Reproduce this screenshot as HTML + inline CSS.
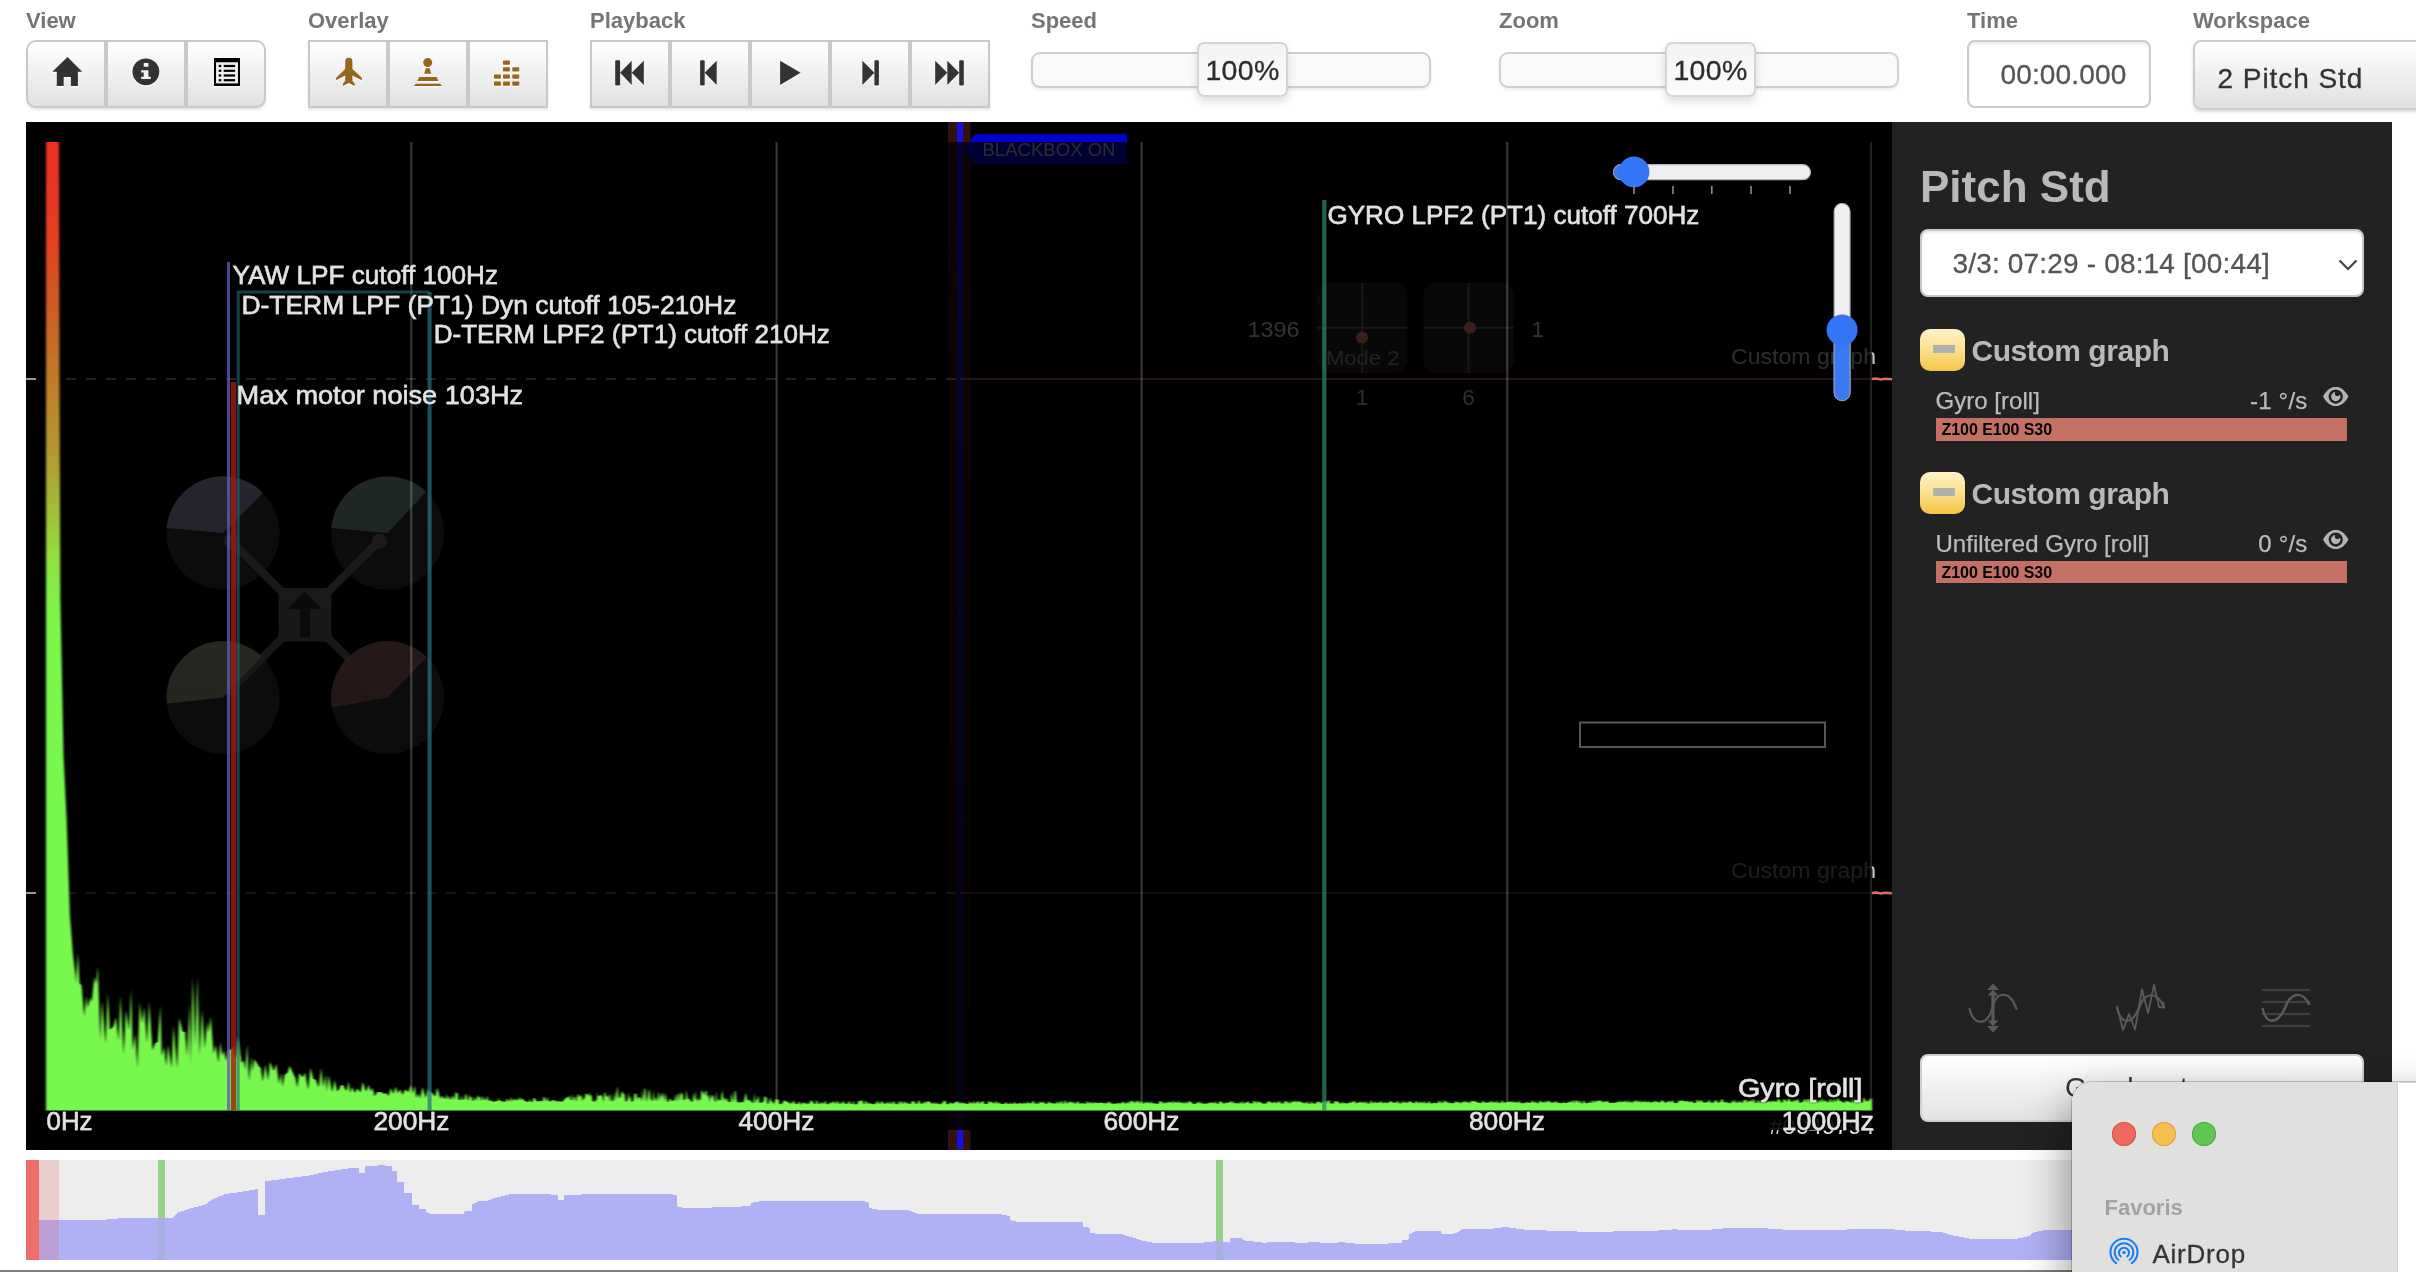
<!DOCTYPE html>
<html><head><meta charset="utf-8"><title>Blackbox Explorer</title>
<style>
*{box-sizing:border-box}
html,body{margin:0;padding:0}
html{width:2416px;height:1272px;overflow:hidden}
body{width:2416px;height:1272px;position:relative;overflow:hidden;background:#fff;font-family:"Liberation Sans",sans-serif;}
.abs{position:absolute}
.lbl{position:absolute;top:9px;font-weight:bold;font-size:22px;line-height:24px;color:#757575;white-space:nowrap}
.grp{position:absolute;top:40px;height:68px;display:flex;border:2px solid #c8c8c8;background:#c8c8c8;box-shadow:0 2px 2px rgba(0,0,0,.10);gap:2px}
.grp .b{flex:1;height:100%;background:linear-gradient(#ffffff 0%,#f4f4f4 30%,#e0e0e0 100%);position:relative}
.grp .b svg{position:absolute;left:0;top:0}
.track{position:absolute;top:52px;height:36px;width:400px;border:2px solid #cfcfcf;border-radius:9px;background:#f9f9f9;box-shadow:0 2px 3px rgba(0,0,0,.08)}
.handle{position:absolute;top:42px;width:91px;height:55px;border:2px solid #d4d4d4;border-radius:7px;background:linear-gradient(#f3f3f3,#fbfbfb);box-shadow:0 5px 8px rgba(0,0,0,.13);font-size:28.5px;line-height:52px;letter-spacing:0.3px;text-align:center;color:#2c2c2c;-webkit-text-stroke:0.3px #2c2c2c}
</style></head>
<body>
<div id="root" style="position:absolute;left:0;top:0;width:2416px;height:1272px;overflow:hidden;will-change:transform;transform:translateZ(0)">
<!-- ===== toolbar labels ===== -->
<div class="lbl" style="left:26px">View</div>
<div class="lbl" style="left:308px">Overlay</div>
<div class="lbl" style="left:590px">Playback</div>
<div class="lbl" style="left:1031px">Speed</div>
<div class="lbl" style="left:1499px">Zoom</div>
<div class="lbl" style="left:1967px">Time</div>
<div class="lbl" style="left:2193px">Workspace</div>

<!--TB-->
<div class="abs" style="left:26px;top:40px;width:240px;height:68px;background:#c9c9c9;border-radius:10px;box-shadow:0 2px 2px rgba(0,0,0,.10);overflow:hidden">
<div class="abs" style="left:2px;top:2px;width:76px;height:64px;border-radius:8px 0 0 8px;background:linear-gradient(#ffffff 0%,#f6f6f6 30%,#e1e1e1 100%)"></div>
<div class="abs" style="left:82px;top:2px;width:76px;height:64px;background:linear-gradient(#ffffff 0%,#f6f6f6 30%,#e1e1e1 100%)"></div>
<div class="abs" style="left:162px;top:2px;width:76px;height:64px;border-radius:0 8px 8px 0;background:linear-gradient(#ffffff 0%,#f6f6f6 30%,#e1e1e1 100%)"></div>
<svg class="abs" style="left:0;top:0" width="240" height="68" viewBox="0 0 240 68"><g transform="translate(0,1.3)" fill="#fff"><path d="M41.5 16.900 L56.200 31.800 H51.900 V45.900 H44.900 V37 H37.700 V45.900 H30.800 V31.800 H26.300 Z"/></g><g fill="#333"><path d="M41.5 16.900 L56.200 31.800 H51.900 V45.900 H44.900 V37 H37.700 V45.900 H30.800 V31.800 H26.300 Z"/></g><g transform="translate(0,1.3)" fill="#fff"><circle cx="119.900" cy="31.800" r="13.400"/></g><g fill="#333"><circle cx="119.900" cy="31.800" r="13.400"/></g><path fill="#f2f2f2" d="M117.700 23 h4.700 v3.800 h-4.700 Z M115.200 30.300 h7.200 v6.500 h2.300 v2.200 h-9.500 v-2.200 h2.500 v-4.200 h-2.500 Z"/><g transform="translate(0,1.3)"><rect x="188" y="18.100" width="26" height="27.800" fill="#fff"/></g><g fill="#000"><path fill-rule="evenodd" d="M188 18.100 H214 V45.900 H188 Z M190.200 22.600 V43.200 H211.800 V22.600 Z"/><rect x="190.200" y="22.600" width="21.600" height="20.600" fill="#efefef"/><rect x="192.700" y="24.9" width="2.600" height="2.200"/><rect x="197.700" y="24.9" width="11.400" height="2.200"/><rect x="192.700" y="29.7" width="2.600" height="2.200"/><rect x="197.700" y="29.7" width="11.400" height="2.200"/><rect x="192.700" y="34.4" width="2.600" height="2.200"/><rect x="197.700" y="34.4" width="11.400" height="2.200"/><rect x="192.700" y="39.1" width="2.600" height="2.200"/><rect x="197.700" y="39.1" width="11.400" height="2.200"/></g></svg>
</div>
<div class="abs" style="left:308px;top:40px;width:240px;height:68px;background:#c9c9c9;box-shadow:0 2px 2px rgba(0,0,0,.10);overflow:hidden">
<div class="abs" style="left:2px;top:2px;width:76px;height:64px;background:linear-gradient(#ffffff 0%,#f6f6f6 30%,#e1e1e1 100%)"></div>
<div class="abs" style="left:82px;top:2px;width:76px;height:64px;background:linear-gradient(#ffffff 0%,#f6f6f6 30%,#e1e1e1 100%)"></div>
<div class="abs" style="left:162px;top:2px;width:76px;height:64px;background:linear-gradient(#ffffff 0%,#f6f6f6 30%,#e1e1e1 100%)"></div>
<svg class="abs" style="left:0;top:0" width="240" height="68" viewBox="0 0 240 68"><g transform="translate(0,1.3)" fill="#fff"><path d="M37.200 21.400 a3.600 3.600 0 0 1 7.200 0 V28.900 L53.300 37.200 a1.600 1.600 0 0 1 0.600 1.300 V40.300 L44.400 35.400 V40.800 L46.700 43.700 V45.900 L40.900 42.900 L35 45.900 V43.700 L37.200 40.800 V35.400 L28.100 40.300 V38.500 a1.600 1.600 0 0 1 0.600 -1.300 L37.200 28.900 Z"/></g><g fill="#96661e"><path d="M37.200 21.400 a3.600 3.600 0 0 1 7.200 0 V28.900 L53.300 37.200 a1.600 1.600 0 0 1 0.600 1.300 V40.300 L44.400 35.400 V40.800 L46.700 43.700 V45.900 L40.900 42.900 L35 45.900 V43.700 L37.200 40.800 V35.400 L28.100 40.300 V38.500 a1.600 1.600 0 0 1 0.600 -1.300 L37.200 28.900 Z"/></g><g transform="translate(0,1.3)" fill="#fff"><circle cx="119.700" cy="22.600" r="4.500"/><path d="M117.700 28.300 H121.700 L123.200 33.800 H116.200 Z"/><path d="M111.600 37 H128.300 a0.800 0.800 0 0 1 0.800 0.800 L130.100 40.900 H109.300 L110.800 37.800 a0.800 0.800 0 0 1 0.800 -0.800 Z"/><path d="M107.800 43.700 H132.100 L134.100 45.900 H105.800 Z"/></g><g fill="#96661e"><circle cx="119.700" cy="22.600" r="4.500"/><path d="M117.700 28.300 H121.700 L123.200 33.800 H116.200 Z"/><path d="M111.600 37 H128.300 a0.800 0.800 0 0 1 0.800 0.800 L130.100 40.900 H109.300 L110.800 37.800 a0.800 0.800 0 0 1 0.800 -0.800 Z"/><path d="M107.800 43.700 H132.100 L134.100 45.900 H105.800 Z"/></g><g transform="translate(0,1.3)" fill="#fff"><rect x="186" y="34.5" width="6.900" height="4.300" rx="0.700"/><rect x="186" y="41.5" width="6.900" height="4.300" rx="0.700"/><rect x="195" y="20.4" width="6.900" height="4.300" rx="0.700"/><rect x="195" y="27.3" width="6.900" height="4.300" rx="0.700"/><rect x="195" y="34.5" width="6.900" height="4.300" rx="0.700"/><rect x="195" y="41.5" width="6.900" height="4.300" rx="0.700"/><rect x="204.3" y="27.3" width="6.900" height="4.300" rx="0.700"/><rect x="204.3" y="34.5" width="6.900" height="4.300" rx="0.700"/><rect x="204.3" y="41.5" width="6.900" height="4.300" rx="0.700"/></g><g fill="#96661e"><rect x="186" y="34.5" width="6.900" height="4.300" rx="0.700"/><rect x="186" y="41.5" width="6.900" height="4.300" rx="0.700"/><rect x="195" y="20.4" width="6.900" height="4.300" rx="0.700"/><rect x="195" y="27.3" width="6.900" height="4.300" rx="0.700"/><rect x="195" y="34.5" width="6.900" height="4.300" rx="0.700"/><rect x="195" y="41.5" width="6.900" height="4.300" rx="0.700"/><rect x="204.3" y="27.3" width="6.900" height="4.300" rx="0.700"/><rect x="204.3" y="34.5" width="6.900" height="4.300" rx="0.700"/><rect x="204.3" y="41.5" width="6.900" height="4.300" rx="0.700"/></g></svg>
</div>
<div class="abs" style="left:590px;top:40px;width:400px;height:68px;background:#c9c9c9;box-shadow:0 2px 2px rgba(0,0,0,.10);overflow:hidden">
<div class="abs" style="left:2px;top:2px;width:76px;height:64px;background:linear-gradient(#ffffff 0%,#f6f6f6 30%,#e1e1e1 100%)"></div>
<div class="abs" style="left:82px;top:2px;width:76px;height:64px;background:linear-gradient(#ffffff 0%,#f6f6f6 30%,#e1e1e1 100%)"></div>
<div class="abs" style="left:162px;top:2px;width:76px;height:64px;background:linear-gradient(#ffffff 0%,#f6f6f6 30%,#e1e1e1 100%)"></div>
<div class="abs" style="left:242px;top:2px;width:76px;height:64px;background:linear-gradient(#ffffff 0%,#f6f6f6 30%,#e1e1e1 100%)"></div>
<div class="abs" style="left:322px;top:2px;width:76px;height:64px;background:linear-gradient(#ffffff 0%,#f6f6f6 30%,#e1e1e1 100%)"></div>
<svg class="abs" style="left:0;top:0" width="400" height="68" viewBox="0 0 400 68"><g transform="translate(0,1.3)" fill="#fff"><rect x="25.2" y="20.200" width="4.9" height="25.300" rx="1.200"/><path d="M30.1 32.800 L41.7 20.700 V45 Z"/><path d="M41.7 32.800 L53.8 20.700 V45 Z"/><rect x="110.1" y="20.200" width="4.6" height="25.300" rx="1.200"/><path d="M114.7 32.800 L126.7 20.700 V45 Z"/><path d="M190.1 20.700 L210.6 32.800 L190.1 45 Z"/><path d="M272.4 20.700 L284.4 32.800 L272.4 45 Z"/><rect x="284.4" y="20.200" width="4.5" height="25.300" rx="1.200"/><path d="M345.2 20.700 L357.3 32.800 L345.2 45 Z"/><path d="M357.3 20.700 L369.2 32.800 L357.3 45 Z"/><rect x="369.2" y="20.200" width="4.6" height="25.300" rx="1.200"/></g><g fill="#333"><rect x="25.2" y="20.200" width="4.9" height="25.300" rx="1.200"/><path d="M30.1 32.800 L41.7 20.700 V45 Z"/><path d="M41.7 32.800 L53.8 20.700 V45 Z"/><rect x="110.1" y="20.200" width="4.6" height="25.300" rx="1.200"/><path d="M114.7 32.800 L126.7 20.700 V45 Z"/><path d="M190.1 20.700 L210.6 32.800 L190.1 45 Z"/><path d="M272.4 20.700 L284.4 32.800 L272.4 45 Z"/><rect x="284.4" y="20.200" width="4.5" height="25.300" rx="1.200"/><path d="M345.2 20.700 L357.3 32.800 L345.2 45 Z"/><path d="M357.3 20.700 L369.2 32.800 L357.3 45 Z"/><rect x="369.2" y="20.200" width="4.6" height="25.300" rx="1.200"/></g></svg>
</div>
<!--/TB-->

<!-- ===== sliders ===== -->
<div class="track" style="left:1031px"></div>
<div class="handle" style="left:1197px">100%</div>
<div class="track" style="left:1499px"></div>
<div class="handle" style="left:1665px">100%</div>

<!-- ===== time ===== -->
<div class="abs" style="left:1967px;top:40px;width:184px;height:68px;border:2px solid #cccccc;border-radius:8px;background:#fff;box-shadow:inset 0 2px 2px rgba(0,0,0,.075);font-size:28px;line-height:66px;color:#555;padding-left:31.500px;letter-spacing:0.15px;-webkit-text-stroke:0.3px #555">00:00.000</div>
<!-- ===== workspace ===== -->
<div class="abs" style="left:2193px;top:40px;width:260px;height:70px;border:2px solid #cccccc;border-radius:8px;background:linear-gradient(#ffffff,#e0e0e0);box-shadow:0 2px 3px rgba(0,0,0,.15);font-size:28px;line-height:73px;color:#333;padding-left:22.500px;letter-spacing:0.95px;-webkit-text-stroke:0.3px #333">2 Pitch Std</div>

<!-- ===== graph area ===== -->
<div class="abs" id="graph" style="left:26px;top:122px;width:1866px;height:1028px;background:#000;overflow:hidden">
<!--GRAPH-->
<svg class="abs" style="left:0;top:0" width="1866" height="1028" viewBox="26 122 1866 1028" font-family="Liberation Sans, sans-serif">
<defs>
<linearGradient id="sg" gradientUnits="userSpaceOnUse" x1="0" y1="142" x2="0" y2="1110"><stop offset="0" stop-color="#eb3323"/><stop offset="0.06" stop-color="#e63826"/><stop offset="0.103" stop-color="#e14123"/><stop offset="0.188" stop-color="#c86428"/><stop offset="0.247" stop-color="#be7d28"/><stop offset="0.315" stop-color="#b49630"/><stop offset="0.374" stop-color="#a5b937"/><stop offset="0.433" stop-color="#91e141"/><stop offset="0.483" stop-color="#7df548"/><stop offset="0.568" stop-color="#78f84d"/><stop offset="1" stop-color="#78f84d"/></linearGradient>
<filter id="bl" x="-2%" y="-2%" width="104%" height="104%"><feGaussianBlur stdDeviation="1.1 0.7"/></filter>
<filter id="ts" x="-5%" y="-30%" width="110%" height="160%"><feGaussianBlur in="SourceGraphic" stdDeviation="0.45" result="b"/><feDropShadow in="b" dx="0" dy="0" stdDeviation="1.2" flood-color="#000" flood-opacity="0.9"/></filter>
<linearGradient id="og" gradientUnits="userSpaceOnUse" x1="0" y1="142" x2="0" y2="1130"><stop offset="0" stop-color="#000" stop-opacity="0.74"/><stop offset="1" stop-color="#000" stop-opacity="0.90"/></linearGradient>
</defs>
<g id="under">
<rect x="948" y="122" width="22.5" height="1028" fill="#34110e"/>
<rect x="957" y="122" width="6.2" height="1028" fill="#1a10d8"/>
<path d="M26 379 H958" stroke="#969696" stroke-width="2" stroke-dasharray="10 10" fill="none"/>
<path d="M960 379 H1872 " stroke="#e87064" stroke-width="1.600" fill="none"/>
<path d="M1872 379 l4 -0.5 l5 1 l4 -0.8 l7 0.6" stroke="#dc6e64" stroke-width="2.6" fill="none"/>
<path d="M26 893 H958" stroke="#969696" stroke-width="2" stroke-dasharray="10 10" fill="none"/>
<path d="M960 893 H1872 " stroke="#e87064" stroke-width="1.600" fill="none"/>
<path d="M1872 893 l4 -0.5 l5 1 l4 -0.8 l7 0.6" stroke="#dc6e64" stroke-width="2.6" fill="none"/>
<polygon points="964,149 975.5,134 1127,134 1127,164 975.5,164" fill="#0000cd"/>
<text x="982.5" y="156" font-size="18" textLength="133" lengthAdjust="spacingAndGlyphs" fill="#a8a8b0">BLACKBOX ON</text>
<text x="1731" y="363.5" font-size="21.5" textLength="145" lengthAdjust="spacingAndGlyphs" fill="#c8c8c8">Custom graph</text>
<text x="1731" y="877.5" font-size="21.5" textLength="145" lengthAdjust="spacingAndGlyphs" fill="#c8c8c8">Custom graph</text>
<text x="1769.5" y="1133.5" font-size="22" textLength="105" lengthAdjust="spacingAndGlyphs" fill="#f0f0f0">#0049794</text>
<g id="craft">
<circle cx="223" cy="533" r="56.5" fill="#3d3d3d"/>
<circle cx="387.6" cy="533" r="56.5" fill="#3d3d3d"/>
<circle cx="223" cy="697.6" r="56.5" fill="#474747"/>
<circle cx="387.6" cy="697.6" r="56.5" fill="#474747"/>
<line x1="305" y1="615" x2="231.2" y2="541.2" stroke="#888893" stroke-width="8" stroke-linecap="round"/>
<circle cx="231.2" cy="541.2" r="7.500" fill="#888893"/>
<line x1="305" y1="615" x2="379.34" y2="541.2" stroke="#888893" stroke-width="8" stroke-linecap="round"/>
<circle cx="379.34" cy="541.2" r="7.500" fill="#888893"/>
<line x1="305" y1="615" x2="231.2" y2="689.34" stroke="#888893" stroke-width="8" stroke-linecap="round"/>
<circle cx="231.2" cy="689.34" r="7.500" fill="#888893"/>
<line x1="305" y1="615" x2="379.34" y2="689.34" stroke="#888893" stroke-width="8" stroke-linecap="round"/>
<circle cx="379.34" cy="689.34" r="7.500" fill="#888893"/>
<rect x="278.5" y="588" width="53" height="53.5" fill="#888893"/>
<polygon points="304.8,591.6 321.8,609 310.1,609 310.1,637.4 299.9,637.4 299.9,609 287.7,609" fill="#373737"/>
<path d="M223 533 L166.7 528.0 A56.5 56.5 0 0 1 263.0 493.0 Z" fill="#c1c1f4" opacity="0.92"/>
<path d="M387.6 533 L331.3 528.0 A56.5 56.5 0 0 1 426.1 491.7 Z" fill="#a3cbcb" opacity="0.92"/>
<path d="M223 697.6 L166.8 703.5 A56.5 56.5 0 0 1 261.5 656.3 Z" fill="#ebebce" opacity="0.92"/>
<path d="M387.6 697.6 L332.0 707.4 A56.5 56.5 0 0 1 426.8 657.0 Z" fill="#e08d8d" opacity="0.92"/>
</g>
<g id="sticks">
<rect x="1317" y="282.7" width="90.4" height="90.2" rx="13" fill="#232323"/>
<rect x="1423.5" y="282.7" width="90.4" height="90.2" rx="13" fill="#232323"/>
<path d="M1362.3 283 V373 M1317 327.8 H1407.4 M1468.5 283 V373 M1423.5 327.8 H1513.9" stroke="#686868" stroke-width="2" fill="none"/>
<circle cx="1362" cy="337.5" r="6" fill="#ff837a"/><circle cx="1470" cy="327.8" r="6" fill="#ff837a"/>
<text x="1247.6" y="337.4" font-size="22.5" textLength="52" lengthAdjust="spacingAndGlyphs" fill="#d9d9d9">1396</text>
<text x="1531.4" y="337.4" font-size="22.5" fill="#d9d9d9">1</text>
<text x="1362" y="404.9" font-size="22.5" text-anchor="middle" fill="#d9d9d9">1</text>
<text x="1468.5" y="404.9" font-size="22.5" text-anchor="middle" fill="#d9d9d9">6</text>
<text x="1326" y="364.6" font-size="21" textLength="73.5" lengthAdjust="spacingAndGlyphs" fill="#989898">Mode 2</text>
</g>
</g>
<rect x="46" y="142" width="1826" height="988" fill="url(#og)"/>
<rect x="410.2" y="142" width="2.2" height="968" fill="#fff" fill-opacity="0.21"/>
<rect x="775.5" y="142" width="2.2" height="968" fill="#fff" fill-opacity="0.21"/>
<rect x="1140.5" y="142" width="2.2" height="968" fill="#fff" fill-opacity="0.21"/>
<rect x="1506.1" y="142" width="2.2" height="968" fill="#fff" fill-opacity="0.21"/>
<rect x="1870.3" y="142" width="1.6" height="968" fill="#fff" fill-opacity="0.16"/>
<polygon filter="url(#bl)" fill="url(#sg)" points="46.0,1110.5 46.0,142.0 59.0,142.0 59.6,400.0 60.4,600.0 63.6,757.0 66.7,820.0 69.9,915.0 73.0,955.0 75.5,975.0 76.0,983.5 77.9,952.5 79.6,982.9 81.6,985.4 84.2,1016.5 86.3,995.4 87.8,1007.9 90.3,997.3 91.7,1002.0 94.4,977.3 96.1,983.9 97.8,966.5 100.2,1040.4 102.0,1000.6 105.6,1043.4 107.8,992.8 109.8,1029.5 111.6,1028.5 113.7,1025.7 115.9,1017.0 118.5,1040.9 120.5,995.7 123.6,1054.6 125.9,1010.3 129.1,1030.5 131.1,989.3 132.8,1050.3 135.3,1033.5 137.4,1067.9 139.7,1002.0 142.2,1023.6 144.2,1006.9 147.0,1043.5 149.1,1001.8 152.6,1050.5 155.0,1043.6 157.7,1041.8 160.4,1005.6 161.8,1056.2 164.2,1047.1 166.3,1066.5 168.1,1044.6 171.6,1068.0 173.5,1025.2 177.1,1068.8 179.2,1017.8 182.6,1031.4 185.1,1032.1 187.0,1056.4 189.6,1003.5 190.7,1063.5 192.7,977.0 195.3,1045.3 197.3,977.0 199.7,1055.2 202.0,1009.2 204.8,1049.1 207.1,1021.5 208.3,1032.4 210.8,1016.9 213.6,1054.0 215.7,1044.8 218.5,1062.7 220.3,1042.0 222.3,1055.8 224.1,1050.6 226.1,1061.3 228.1,1050.1 231.6,1049.3 233.4,1045.8 235.8,1059.6 237.6,1035.6 241.6,1063.0 243.8,1060.4 245.2,1070.0 247.2,1044.5 249.0,1080.7 251.7,1056.5 252.8,1071.2 254.5,1059.0 258.5,1065.7 260.9,1068.2 262.8,1082.1 265.3,1064.4 268.1,1080.4 270.0,1061.5 273.8,1071.3 276.4,1063.8 279.0,1084.1 281.2,1072.5 282.5,1087.0 284.5,1074.9 287.6,1072.4 289.7,1065.8 293.3,1073.8 295.4,1078.1 297.3,1087.7 299.2,1072.9 302.8,1077.6 305.0,1072.2 308.1,1090.1 310.5,1067.7 313.4,1079.1 315.6,1079.5 318.7,1087.4 321.2,1067.5 323.1,1087.3 325.7,1074.9 326.9,1091.7 328.7,1075.3 332.2,1092.3 334.7,1080.0 337.2,1091.6 339.4,1088.7 340.6,1085.5 343.0,1084.9 346.3,1091.3 348.8,1081.5 350.2,1093.2 352.2,1087.1 355.0,1093.3 357.1,1088.2 360.6,1092.4 362.7,1082.1 366.1,1091.8 368.8,1084.8 370.8,1091.7 372.5,1087.4 374.6,1096.5 377.1,1091.7 379.2,1092.4 381.4,1091.7 383.8,1093.9 386.3,1093.1 388.6,1096.1 390.6,1088.1 393.2,1093.9 395.7,1086.6 397.7,1093.4 399.9,1089.2 402.7,1094.9 405.0,1089.2 408.4,1092.2 411.0,1084.5 412.4,1093.8 415.0,1085.8 416.1,1098.0 418.3,1093.5 420.1,1098.5 422.5,1087.0 425.7,1098.2 428.1,1088.6 429.4,1091.3 432.1,1092.9 435.1,1096.8 437.3,1087.5 440.5,1099.0 441.5,1096.7 442.5,1095.8 443.5,1097.8 444.5,1099.0 445.5,1098.1 446.5,1093.6 447.5,1099.9 448.5,1096.0 449.5,1097.3 450.5,1100.0 451.5,1098.4 452.5,1095.6 453.5,1096.9 454.5,1100.1 455.5,1091.3 456.5,1094.1 457.5,1091.9 458.5,1100.1 459.5,1099.4 460.5,1100.4 461.5,1094.9 462.5,1099.5 463.5,1100.2 464.5,1098.5 465.5,1093.7 466.5,1094.8 467.5,1099.8 468.5,1100.4 469.5,1093.9 470.5,1097.7 471.5,1096.5 472.5,1100.7 473.5,1100.9 474.5,1096.8 475.5,1099.1 476.5,1100.9 477.5,1094.5 478.5,1097.6 479.5,1096.1 480.5,1101.1 481.5,1095.7 482.5,1101.2 483.5,1095.8 484.5,1099.4 485.5,1100.2 486.5,1098.8 487.5,1095.5 488.5,1100.7 489.5,1101.3 490.5,1099.3 491.5,1101.0 492.5,1101.5 493.5,1101.4 494.5,1101.7 495.5,1101.3 496.5,1100.9 497.5,1101.0 498.5,1098.0 499.5,1101.1 500.5,1100.0 501.5,1101.6 502.5,1100.9 503.5,1102.0 504.5,1101.4 505.5,1102.0 506.5,1098.4 507.5,1099.8 508.5,1101.6 509.5,1100.3 510.5,1096.9 511.5,1101.8 512.5,1097.9 513.5,1100.5 514.5,1100.2 515.5,1097.8 516.5,1100.7 517.5,1100.1 518.5,1099.0 519.5,1096.6 520.5,1101.0 521.5,1097.9 522.5,1098.9 523.5,1099.4 524.5,1100.7 525.5,1101.0 526.5,1101.9 527.5,1101.8 528.5,1101.9 529.5,1098.7 530.5,1101.4 531.5,1101.7 532.5,1101.9 533.5,1098.1 534.5,1097.9 535.5,1099.3 536.5,1101.3 537.5,1101.5 538.5,1101.3 539.5,1100.6 540.5,1101.7 541.5,1100.6 542.5,1101.4 543.5,1096.9 544.5,1096.7 545.5,1099.8 546.5,1101.4 547.5,1096.4 548.5,1101.1 549.5,1100.8 550.5,1102.0 551.5,1100.6 552.5,1100.0 553.5,1099.8 554.5,1101.5 555.5,1099.7 556.5,1102.0 557.5,1101.1 558.5,1101.8 559.5,1100.3 560.5,1102.0 561.5,1102.0 562.5,1100.8 563.5,1101.2 564.5,1098.6 565.5,1099.0 566.5,1096.7 567.5,1097.7 568.5,1097.0 569.5,1094.9 570.5,1100.1 571.5,1100.5 572.5,1093.2 573.5,1101.6 574.5,1096.4 575.5,1097.3 576.5,1101.9 577.5,1094.7 578.5,1093.8 579.5,1097.3 580.5,1095.9 581.5,1094.6 582.5,1101.6 583.5,1098.2 584.5,1098.4 585.5,1093.8 586.5,1094.1 587.5,1093.7 588.5,1097.1 589.5,1092.3 590.5,1095.6 591.5,1095.3 592.5,1100.8 593.5,1102.0 594.5,1101.5 595.5,1099.5 596.5,1101.7 597.5,1092.2 598.5,1096.8 599.5,1095.6 600.5,1095.6 601.5,1094.6 602.5,1097.6 603.5,1102.0 604.5,1092.0 605.5,1092.9 606.5,1097.1 607.5,1096.6 608.5,1094.3 609.5,1101.8 610.5,1092.6 611.5,1100.3 612.5,1101.8 613.5,1100.1 614.5,1092.3 615.5,1100.7 616.5,1091.9 617.5,1086.1 618.5,1096.6 619.5,1098.4 620.5,1096.8 621.5,1092.8 622.5,1091.0 623.5,1094.3 624.5,1093.8 625.5,1101.7 626.5,1101.2 627.5,1100.2 628.5,1092.0 629.5,1099.6 630.5,1095.6 631.5,1102.0 632.5,1101.8 633.5,1100.1 634.5,1093.8 635.5,1093.4 636.5,1093.8 637.5,1099.9 638.5,1096.7 639.5,1097.6 640.5,1097.6 641.5,1101.5 642.5,1089.7 643.5,1100.9 644.5,1088.1 645.5,1089.2 646.5,1102.0 647.5,1098.0 648.5,1091.9 649.5,1089.0 650.5,1098.2 651.5,1100.4 652.5,1100.9 653.5,1089.9 654.5,1100.9 655.5,1096.6 656.5,1101.4 657.5,1097.5 658.5,1090.4 659.5,1101.5 660.5,1093.1 661.5,1097.9 662.5,1092.1 663.5,1095.2 664.5,1100.9 665.5,1092.2 666.5,1098.4 667.5,1102.0 668.5,1102.0 669.5,1098.4 670.5,1098.9 671.5,1100.4 672.5,1101.5 673.5,1100.0 674.5,1100.2 675.5,1093.4 676.5,1102.0 677.5,1094.7 678.5,1093.3 679.5,1101.6 680.5,1091.6 681.5,1095.2 682.5,1092.0 683.5,1100.4 684.5,1099.5 685.5,1099.3 686.5,1089.9 687.5,1096.8 688.5,1099.6 689.5,1098.8 690.5,1100.4 691.5,1101.9 692.5,1101.7 693.5,1092.6 694.5,1100.3 695.5,1090.6 696.5,1100.6 697.5,1100.5 698.5,1097.6 699.5,1101.1 700.5,1099.3 701.5,1089.9 702.5,1091.4 703.5,1092.8 704.5,1095.9 705.5,1090.9 706.5,1090.4 707.5,1097.3 708.5,1094.6 709.5,1102.2 710.5,1094.4 711.5,1098.7 712.5,1094.2 713.5,1096.0 714.5,1100.7 715.5,1102.4 716.5,1091.0 717.5,1102.1 718.5,1098.7 719.5,1100.3 720.5,1100.8 721.5,1094.7 722.5,1090.2 723.5,1101.2 724.5,1096.2 725.5,1100.9 726.5,1097.7 727.5,1099.9 728.5,1102.1 729.5,1102.2 730.5,1101.9 731.5,1092.0 732.5,1098.8 733.5,1101.9 734.5,1092.1 735.5,1090.3 736.5,1099.6 737.5,1102.6 738.5,1102.3 739.5,1103.0 740.5,1101.0 741.5,1103.0 742.5,1102.0 743.5,1101.9 744.5,1098.2 745.5,1093.0 746.5,1095.5 747.5,1100.4 748.5,1100.4 749.5,1099.1 750.5,1101.0 751.5,1101.5 752.5,1103.5 753.5,1102.2 754.5,1092.8 755.5,1103.3 756.5,1100.1 757.5,1098.6 758.5,1095.5 759.5,1103.0 760.5,1102.6 761.5,1102.9 762.5,1101.7 763.5,1101.4 764.5,1095.5 765.5,1097.2 766.5,1097.1 767.5,1104.1 768.5,1104.1 769.5,1099.6 770.5,1097.7 771.5,1102.0 772.5,1101.2 773.5,1104.3 774.5,1102.8 775.5,1098.5 776.5,1099.7 777.5,1099.7 778.5,1098.9 779.5,1103.9 780.5,1104.3 781.5,1104.2 782.5,1102.6 783.5,1101.5 784.5,1099.6 785.5,1101.3 786.5,1101.8 787.5,1101.0 788.5,1103.0 789.5,1102.4 790.5,1104.5 791.5,1100.9 792.5,1104.0 793.5,1099.9 794.5,1101.9 795.5,1103.7 796.5,1104.3 797.5,1103.9 798.5,1101.9 799.5,1101.5 800.5,1104.3 801.5,1104.4 802.5,1102.6 803.5,1102.3 804.5,1103.3 805.5,1104.0 806.5,1102.2 807.5,1104.5 808.5,1103.7 809.5,1103.0 810.5,1099.8 811.5,1102.0 812.5,1100.4 813.5,1102.9 814.5,1104.0 815.5,1103.9 816.5,1099.8 817.5,1101.6 818.5,1103.7 819.5,1104.4 820.5,1102.8 821.5,1101.9 822.5,1103.2 823.5,1103.9 824.5,1101.9 825.5,1100.2 826.5,1104.0 827.5,1104.4 828.5,1103.6 829.5,1103.3 830.5,1101.9 831.5,1104.1 832.5,1101.2 833.5,1101.6 834.5,1102.9 835.5,1104.1 836.5,1100.0 837.5,1103.7 838.5,1101.1 839.5,1104.0 840.5,1104.0 841.5,1101.5 842.5,1103.8 843.5,1100.2 844.5,1103.0 845.5,1104.1 846.5,1104.0 847.5,1103.3 848.5,1102.1 849.5,1100.3 850.5,1104.2 851.5,1103.4 852.5,1104.0 853.5,1100.2 854.5,1104.2 855.5,1104.4 856.5,1104.3 857.5,1103.4 858.5,1100.7 859.5,1100.8 860.5,1101.7 861.5,1100.1 862.5,1100.5 863.5,1103.7 864.5,1104.1 865.5,1100.5 866.5,1101.7 867.5,1104.4 868.5,1102.1 869.5,1103.5 870.5,1103.5 871.5,1103.6 872.5,1104.1 873.5,1104.4 874.5,1103.8 875.5,1103.6 876.5,1100.4 877.5,1104.2 878.5,1100.3 879.5,1104.0 880.5,1103.5 881.5,1101.3 882.5,1101.3 883.5,1103.2 884.5,1104.3 885.5,1103.1 886.5,1103.5 887.5,1100.7 888.5,1104.0 889.5,1103.5 890.5,1100.8 891.5,1104.3 892.5,1103.3 893.5,1101.3 894.5,1101.6 895.5,1104.3 896.5,1104.3 897.5,1104.3 898.5,1100.7 899.5,1103.9 900.5,1101.7 901.5,1100.8 902.5,1103.6 903.5,1103.8 904.5,1100.5 905.5,1102.4 906.5,1103.8 907.5,1101.9 908.5,1103.7 909.5,1103.8 910.5,1104.3 911.5,1101.7 912.5,1100.7 913.5,1102.3 914.5,1100.6 915.5,1104.3 916.5,1103.9 917.5,1103.1 918.5,1100.5 919.5,1100.5 920.5,1103.4 921.5,1103.9 922.5,1103.3 923.5,1103.0 924.5,1100.7 925.5,1104.0 926.5,1101.5 927.5,1101.8 928.5,1101.3 929.5,1101.6 930.5,1102.5 931.5,1103.6 932.5,1103.6 933.5,1103.5 934.5,1101.6 935.5,1104.2 936.5,1104.0 937.5,1101.7 938.5,1103.9 939.5,1104.2 940.5,1104.3 941.5,1102.7 942.5,1103.6 943.5,1100.4 944.5,1101.0 945.5,1100.4 946.5,1103.8 947.5,1104.2 948.5,1104.2 949.5,1103.0 950.5,1102.0 951.5,1103.2 952.5,1103.9 953.5,1103.3 954.5,1102.4 955.5,1102.2 956.5,1101.8 957.5,1101.3 958.5,1102.2 959.5,1104.1 960.5,1101.3 961.5,1103.7 962.5,1102.7 963.5,1103.4 964.5,1101.9 965.5,1104.0 966.5,1103.8 967.5,1103.8 968.5,1104.0 969.5,1101.1 970.5,1102.6 971.5,1103.6 972.5,1103.4 973.5,1100.5 974.5,1102.9 975.5,1103.9 976.5,1101.5 977.5,1102.3 978.5,1100.5 979.5,1104.1 980.5,1103.1 981.5,1101.5 982.5,1101.4 983.5,1100.9 984.5,1104.2 985.5,1103.7 986.5,1104.1 987.5,1104.0 988.5,1100.6 989.5,1102.6 990.5,1100.9 991.5,1103.4 992.5,1101.2 993.5,1103.2 994.5,1103.8 995.5,1101.7 996.5,1100.8 997.5,1104.1 998.5,1102.6 999.5,1102.5 1000.5,1103.9 1001.5,1103.4 1002.5,1104.0 1003.5,1103.9 1004.5,1103.8 1005.5,1102.6 1006.5,1102.3 1007.5,1103.9 1008.5,1104.2 1009.5,1103.6 1010.5,1102.2 1011.5,1103.9 1012.5,1103.6 1013.5,1103.9 1014.5,1101.6 1015.5,1102.8 1016.5,1104.1 1017.5,1104.1 1018.5,1103.3 1019.5,1102.7 1020.5,1102.4 1021.5,1104.1 1022.5,1104.0 1023.5,1102.1 1024.5,1103.3 1025.5,1103.7 1026.5,1103.6 1027.5,1100.7 1028.5,1103.6 1029.5,1102.7 1030.5,1103.4 1031.5,1103.2 1032.5,1101.2 1033.5,1100.5 1034.5,1103.4 1035.5,1103.9 1036.5,1101.9 1037.5,1103.9 1038.5,1104.1 1039.5,1101.0 1040.5,1103.2 1041.5,1101.4 1042.5,1103.3 1043.5,1101.1 1044.5,1103.1 1045.5,1103.9 1046.5,1104.1 1047.5,1102.7 1048.5,1102.3 1049.5,1100.9 1050.5,1104.1 1051.5,1102.4 1052.5,1103.4 1053.5,1102.9 1054.5,1104.0 1055.5,1103.6 1056.5,1102.8 1057.5,1100.8 1058.5,1104.0 1059.5,1102.9 1060.5,1101.5 1061.5,1100.6 1062.5,1103.8 1063.5,1104.0 1064.5,1100.7 1065.5,1100.5 1066.5,1102.9 1067.5,1104.1 1068.5,1100.8 1069.5,1103.3 1070.5,1100.9 1071.5,1102.4 1072.5,1101.4 1073.5,1103.9 1074.5,1101.6 1075.5,1103.8 1076.5,1103.2 1077.5,1101.2 1078.5,1101.3 1079.5,1103.8 1080.5,1103.8 1081.5,1103.2 1082.5,1102.8 1083.5,1103.3 1084.5,1104.0 1085.5,1103.7 1086.5,1101.9 1087.5,1100.9 1088.5,1104.1 1089.5,1102.6 1090.5,1101.7 1091.5,1104.1 1092.5,1101.3 1093.5,1103.9 1094.5,1102.4 1095.5,1102.6 1096.5,1102.3 1097.5,1103.5 1098.5,1103.1 1099.5,1102.5 1100.5,1103.1 1101.5,1102.1 1102.5,1103.0 1103.5,1103.1 1104.5,1104.0 1105.5,1102.3 1106.5,1102.9 1107.5,1103.7 1108.5,1101.6 1109.5,1101.5 1110.5,1103.0 1111.5,1103.8 1112.5,1102.9 1113.5,1103.9 1114.5,1103.9 1115.5,1103.1 1116.5,1104.0 1117.5,1103.0 1118.5,1102.8 1119.5,1104.0 1120.5,1102.2 1121.5,1104.0 1122.5,1101.8 1123.5,1101.5 1124.5,1102.7 1125.5,1104.0 1126.5,1102.8 1127.5,1103.2 1128.5,1100.6 1129.5,1103.9 1130.5,1101.1 1131.5,1100.3 1132.5,1101.7 1133.5,1101.3 1134.5,1103.7 1135.5,1100.4 1136.5,1102.8 1137.5,1100.5 1138.5,1100.8 1139.5,1103.8 1140.5,1101.4 1141.5,1100.7 1142.5,1104.0 1143.5,1103.3 1144.5,1101.6 1145.5,1103.8 1146.5,1100.9 1147.5,1103.5 1148.5,1101.3 1149.5,1103.8 1150.5,1102.7 1151.5,1100.7 1152.5,1103.7 1153.5,1103.5 1154.5,1102.7 1155.5,1103.4 1156.5,1104.0 1157.5,1103.7 1158.5,1103.8 1159.5,1100.6 1160.5,1102.0 1161.5,1100.8 1162.5,1103.8 1163.5,1101.4 1164.5,1103.9 1165.5,1102.6 1166.5,1102.2 1167.5,1103.2 1168.5,1101.0 1169.5,1102.5 1170.5,1102.4 1171.5,1100.9 1172.5,1103.9 1173.5,1100.3 1174.5,1102.2 1175.5,1103.1 1176.5,1101.3 1177.5,1103.5 1178.5,1100.3 1179.5,1102.4 1180.5,1103.2 1181.5,1101.5 1182.5,1102.9 1183.5,1103.7 1184.5,1101.6 1185.5,1103.9 1186.5,1101.2 1187.5,1103.5 1188.5,1102.1 1189.5,1100.3 1190.5,1102.3 1191.5,1102.0 1192.5,1103.3 1193.5,1103.9 1194.5,1103.9 1195.5,1103.8 1196.5,1102.2 1197.5,1102.9 1198.5,1102.6 1199.5,1100.8 1200.5,1103.8 1201.5,1103.6 1202.5,1102.0 1203.5,1103.9 1204.5,1103.9 1205.5,1103.2 1206.5,1103.8 1207.5,1103.2 1208.5,1103.6 1209.5,1102.3 1210.5,1102.3 1211.5,1103.6 1212.5,1102.1 1213.5,1102.8 1214.5,1103.8 1215.5,1100.5 1216.5,1103.5 1217.5,1103.7 1218.5,1103.8 1219.5,1102.1 1220.5,1100.9 1221.5,1101.4 1222.5,1103.0 1223.5,1103.4 1224.5,1103.9 1225.5,1102.0 1226.5,1102.4 1227.5,1103.2 1228.5,1102.0 1229.5,1102.9 1230.5,1100.5 1231.5,1101.6 1232.5,1103.5 1233.5,1100.7 1234.5,1103.9 1235.5,1102.5 1236.5,1103.0 1237.5,1103.5 1238.5,1103.8 1239.5,1101.3 1240.5,1103.9 1241.5,1102.4 1242.5,1100.4 1243.5,1103.7 1244.5,1103.6 1245.5,1102.2 1246.5,1102.6 1247.5,1102.0 1248.5,1101.1 1249.5,1103.6 1250.5,1103.3 1251.5,1103.3 1252.5,1103.8 1253.5,1100.7 1254.5,1101.3 1255.5,1101.6 1256.5,1103.8 1257.5,1101.0 1258.5,1101.5 1259.5,1102.7 1260.5,1101.5 1261.5,1102.8 1262.5,1103.5 1263.5,1103.7 1264.5,1103.5 1265.5,1103.8 1266.5,1103.2 1267.5,1101.4 1268.5,1101.7 1269.5,1100.9 1270.5,1101.6 1271.5,1103.4 1272.5,1102.4 1273.5,1102.8 1274.5,1101.2 1275.5,1102.5 1276.5,1103.4 1277.5,1102.0 1278.5,1100.2 1279.5,1103.5 1280.5,1100.7 1281.5,1103.8 1282.5,1103.4 1283.5,1103.4 1284.5,1101.5 1285.5,1100.4 1286.5,1101.4 1287.5,1103.2 1288.5,1100.7 1289.5,1103.2 1290.5,1103.4 1291.5,1100.6 1292.5,1102.0 1293.5,1101.7 1294.5,1101.8 1295.5,1100.1 1296.5,1102.7 1297.5,1100.9 1298.5,1101.7 1299.5,1100.8 1300.5,1102.8 1301.5,1101.5 1302.5,1102.2 1303.5,1103.2 1304.5,1103.5 1305.5,1102.0 1306.5,1103.7 1307.5,1100.5 1308.5,1103.6 1309.5,1103.8 1310.5,1103.7 1311.5,1100.4 1312.5,1103.1 1313.5,1103.6 1314.5,1103.8 1315.5,1103.7 1316.5,1101.7 1317.5,1101.9 1318.5,1101.6 1319.5,1101.5 1320.5,1103.7 1321.5,1102.1 1322.5,1103.0 1323.5,1101.0 1324.5,1101.0 1325.5,1100.6 1326.5,1103.7 1327.5,1100.8 1328.5,1100.5 1329.5,1100.3 1330.5,1103.6 1331.5,1103.4 1332.5,1103.6 1333.5,1103.7 1334.5,1100.9 1335.5,1101.1 1336.5,1101.9 1337.5,1101.0 1338.5,1101.9 1339.5,1103.2 1340.5,1103.6 1341.5,1103.6 1342.5,1101.3 1343.5,1103.4 1344.5,1103.1 1345.5,1102.8 1346.5,1103.7 1347.5,1103.3 1348.5,1103.2 1349.5,1101.5 1350.5,1103.0 1351.5,1103.1 1352.5,1100.2 1353.5,1102.5 1354.5,1100.8 1355.5,1102.0 1356.5,1103.7 1357.5,1102.8 1358.5,1102.7 1359.5,1101.3 1360.5,1103.0 1361.5,1101.6 1362.5,1102.3 1363.5,1103.4 1364.5,1100.8 1365.5,1103.6 1366.5,1101.0 1367.5,1103.5 1368.5,1103.7 1369.5,1103.4 1370.5,1101.3 1371.5,1100.1 1372.5,1103.7 1373.5,1102.5 1374.5,1102.5 1375.5,1101.1 1376.5,1103.4 1377.5,1102.5 1378.5,1103.0 1379.5,1100.9 1380.5,1103.2 1381.5,1100.3 1382.5,1103.2 1383.5,1103.4 1384.5,1101.6 1385.5,1102.5 1386.5,1103.6 1387.5,1101.9 1388.5,1103.6 1389.5,1101.2 1390.5,1101.6 1391.5,1101.2 1392.5,1101.9 1393.5,1103.0 1394.5,1102.8 1395.5,1102.8 1396.5,1100.6 1397.5,1103.6 1398.5,1100.6 1399.5,1103.6 1400.5,1103.4 1401.5,1103.2 1402.5,1100.6 1403.5,1102.4 1404.5,1102.9 1405.5,1100.7 1406.5,1103.3 1407.5,1102.6 1408.5,1102.3 1409.5,1101.3 1410.5,1101.3 1411.5,1101.8 1412.5,1103.0 1413.5,1103.0 1414.5,1103.4 1415.5,1100.9 1416.5,1101.8 1417.5,1101.4 1418.5,1103.4 1419.5,1102.7 1420.5,1101.2 1421.5,1102.1 1422.5,1103.5 1423.5,1102.6 1424.5,1100.6 1425.5,1103.3 1426.5,1103.4 1427.5,1103.1 1428.5,1101.6 1429.5,1100.9 1430.5,1103.4 1431.5,1103.4 1432.5,1103.2 1433.5,1103.0 1434.5,1102.3 1435.5,1103.4 1436.5,1103.0 1437.5,1103.3 1438.5,1100.1 1439.5,1101.4 1440.5,1103.5 1441.5,1100.2 1442.5,1103.5 1443.5,1102.8 1444.5,1100.1 1445.5,1101.1 1446.5,1101.4 1447.5,1102.6 1448.5,1103.3 1449.5,1101.8 1450.5,1103.5 1451.5,1103.3 1452.5,1102.8 1453.5,1103.6 1454.5,1102.8 1455.5,1101.1 1456.5,1101.6 1457.5,1102.4 1458.5,1101.9 1459.5,1102.5 1460.5,1103.4 1461.5,1102.0 1462.5,1102.7 1463.5,1101.4 1464.5,1100.5 1465.5,1102.6 1466.5,1102.1 1467.5,1101.3 1468.5,1102.7 1469.5,1103.2 1470.5,1101.4 1471.5,1100.7 1472.5,1101.2 1473.5,1101.5 1474.5,1100.8 1475.5,1101.6 1476.5,1101.8 1477.5,1102.5 1478.5,1103.0 1479.5,1101.9 1480.5,1103.5 1481.5,1102.7 1482.5,1101.1 1483.5,1101.5 1484.5,1101.8 1485.5,1103.1 1486.5,1102.6 1487.5,1102.5 1488.5,1101.9 1489.5,1102.7 1490.5,1101.6 1491.5,1100.4 1492.5,1103.3 1493.5,1101.7 1494.5,1101.2 1495.5,1102.7 1496.5,1102.4 1497.5,1100.1 1498.5,1103.5 1499.5,1102.2 1500.5,1103.3 1501.5,1101.1 1502.5,1100.3 1503.5,1102.3 1504.5,1103.4 1505.5,1102.0 1506.5,1102.2 1507.5,1101.4 1508.5,1102.3 1509.5,1101.8 1510.5,1100.9 1511.5,1102.2 1512.5,1102.6 1513.5,1100.2 1514.5,1103.2 1515.5,1101.5 1516.5,1102.7 1517.5,1101.2 1518.5,1103.4 1519.5,1100.0 1520.5,1102.8 1521.5,1103.4 1522.5,1103.0 1523.5,1102.6 1524.5,1103.5 1525.5,1102.6 1526.5,1102.6 1527.5,1101.4 1528.5,1102.8 1529.5,1103.0 1530.5,1103.1 1531.5,1101.2 1532.5,1100.2 1533.5,1102.2 1534.5,1103.1 1535.5,1100.9 1536.5,1102.6 1537.5,1103.2 1538.5,1103.3 1539.5,1101.0 1540.5,1100.8 1541.5,1101.7 1542.5,1102.4 1543.5,1102.0 1544.5,1103.1 1545.5,1100.0 1546.5,1102.8 1547.5,1101.6 1548.5,1100.8 1549.5,1100.8 1550.5,1102.3 1551.5,1102.9 1552.5,1102.0 1553.5,1103.3 1554.5,1100.7 1555.5,1102.7 1556.5,1100.6 1557.5,1103.0 1558.5,1102.7 1559.5,1103.0 1560.5,1102.5 1561.5,1103.2 1562.5,1103.4 1563.5,1101.2 1564.5,1102.9 1565.5,1103.0 1566.5,1102.9 1567.5,1102.3 1568.5,1102.4 1569.5,1101.6 1570.5,1101.5 1571.5,1102.7 1572.5,1100.1 1573.5,1100.5 1574.5,1103.4 1575.5,1100.6 1576.5,1100.2 1577.5,1100.8 1578.5,1103.2 1579.5,1100.6 1580.5,1101.6 1581.5,1103.4 1582.5,1103.4 1583.5,1099.9 1584.5,1101.5 1585.5,1103.0 1586.5,1103.3 1587.5,1103.2 1588.5,1103.0 1589.5,1100.8 1590.5,1102.7 1591.5,1103.2 1592.5,1100.1 1593.5,1100.7 1594.5,1103.2 1595.5,1100.2 1596.5,1101.6 1597.5,1100.8 1598.5,1101.3 1599.5,1100.1 1600.5,1100.7 1601.5,1100.4 1602.5,1103.1 1603.5,1101.2 1604.5,1102.0 1605.5,1101.0 1606.5,1102.3 1607.5,1100.2 1608.5,1101.8 1609.5,1102.9 1610.5,1103.0 1611.5,1103.2 1612.5,1102.1 1613.5,1103.3 1614.5,1102.2 1615.5,1103.2 1616.5,1102.1 1617.5,1102.1 1618.5,1101.9 1619.5,1100.2 1620.5,1103.3 1621.5,1100.4 1622.5,1102.2 1623.5,1101.8 1624.5,1101.3 1625.5,1100.3 1626.5,1102.5 1627.5,1102.3 1628.5,1099.6 1629.5,1103.3 1630.5,1101.4 1631.5,1101.4 1632.5,1103.3 1633.5,1101.5 1634.5,1101.2 1635.5,1099.8 1636.5,1102.6 1637.5,1099.4 1638.5,1102.0 1639.5,1102.1 1640.5,1099.9 1641.5,1103.3 1642.5,1100.9 1643.5,1101.4 1644.5,1102.6 1645.5,1100.1 1646.5,1102.5 1647.5,1102.1 1648.5,1101.9 1649.5,1100.6 1650.5,1103.0 1651.5,1102.2 1652.5,1102.3 1653.5,1101.7 1654.5,1100.3 1655.5,1102.7 1656.5,1100.3 1657.5,1102.3 1658.5,1101.9 1659.5,1102.8 1660.5,1101.9 1661.5,1099.4 1662.5,1101.2 1663.5,1100.5 1664.5,1102.6 1665.5,1102.6 1666.5,1102.7 1667.5,1101.5 1668.5,1101.3 1669.5,1100.5 1670.5,1103.3 1671.5,1100.8 1672.5,1099.9 1673.5,1101.7 1674.5,1103.2 1675.5,1102.7 1676.5,1103.3 1677.5,1103.0 1678.5,1099.6 1679.5,1101.4 1680.5,1101.1 1681.5,1100.4 1682.5,1099.7 1683.5,1101.4 1684.5,1101.3 1685.5,1101.3 1686.5,1100.9 1687.5,1101.4 1688.5,1101.0 1689.5,1102.9 1690.5,1101.1 1691.5,1102.0 1692.5,1100.5 1693.5,1103.1 1694.5,1103.0 1695.5,1103.2 1696.5,1100.4 1697.5,1099.6 1698.5,1101.1 1699.5,1102.4 1700.5,1100.1 1701.5,1100.3 1702.5,1101.5 1703.5,1102.7 1704.5,1102.6 1705.5,1102.2 1706.5,1102.5 1707.5,1102.1 1708.5,1101.1 1709.5,1099.3 1710.5,1103.2 1711.5,1101.5 1712.5,1103.2 1713.5,1103.1 1714.5,1100.1 1715.5,1101.4 1716.5,1099.4 1717.5,1102.0 1718.5,1103.2 1719.5,1102.2 1720.5,1101.3 1721.5,1099.2 1722.5,1098.9 1723.5,1101.8 1724.5,1102.1 1725.5,1103.1 1726.5,1101.0 1727.5,1102.8 1728.5,1103.0 1729.5,1103.2 1730.5,1103.2 1731.5,1100.7 1732.5,1103.0 1733.5,1098.9 1734.5,1103.1 1735.5,1099.5 1736.5,1103.0 1737.5,1103.2 1738.5,1100.4 1739.5,1102.7 1740.5,1100.3 1741.5,1102.9 1742.5,1103.1 1743.5,1100.1 1744.5,1100.4 1745.5,1099.5 1746.5,1100.3 1747.5,1103.1 1748.5,1100.9 1749.5,1100.4 1750.5,1101.8 1751.5,1098.9 1752.5,1102.6 1753.5,1098.6 1754.5,1100.3 1755.5,1103.2 1756.5,1103.2 1757.5,1100.7 1758.5,1099.7 1759.5,1103.1 1760.5,1102.4 1761.5,1100.2 1762.5,1102.9 1763.5,1099.3 1764.5,1101.6 1765.5,1103.1 1766.5,1102.2 1767.5,1101.1 1768.5,1101.8 1769.5,1100.5 1770.5,1102.9 1771.5,1099.7 1772.5,1102.2 1773.5,1100.7 1774.5,1100.7 1775.5,1101.9 1776.5,1102.0 1777.5,1099.7 1778.5,1098.5 1779.5,1099.7 1780.5,1101.1 1781.5,1102.4 1782.5,1103.1 1783.5,1098.2 1784.5,1100.2 1785.5,1099.3 1786.5,1102.2 1787.5,1100.8 1788.5,1098.2 1789.5,1099.3 1790.5,1100.8 1791.5,1102.3 1792.5,1101.8 1793.5,1098.8 1794.5,1102.0 1795.5,1100.3 1796.5,1100.8 1797.5,1098.7 1798.5,1099.4 1799.5,1102.4 1800.5,1103.1 1801.5,1102.5 1802.5,1101.8 1803.5,1100.8 1804.5,1099.3 1805.5,1098.7 1806.5,1103.1 1807.5,1099.1 1808.5,1099.3 1809.5,1098.8 1810.5,1100.9 1811.5,1102.4 1812.5,1098.9 1813.5,1099.2 1814.5,1100.1 1815.5,1098.4 1816.5,1102.1 1817.5,1103.0 1818.5,1101.0 1819.5,1099.3 1820.5,1102.7 1821.5,1099.6 1822.5,1098.2 1823.5,1102.5 1824.5,1100.6 1825.5,1100.1 1826.5,1101.4 1827.5,1102.6 1828.5,1102.4 1829.5,1099.5 1830.5,1099.2 1831.5,1101.4 1832.5,1102.9 1833.5,1099.1 1834.5,1099.3 1835.5,1102.5 1836.5,1100.7 1837.5,1098.3 1838.5,1098.4 1839.5,1101.0 1840.5,1101.3 1841.5,1100.6 1842.5,1102.6 1843.5,1102.6 1844.5,1102.7 1845.5,1099.8 1846.5,1101.9 1847.5,1100.7 1848.5,1101.7 1849.5,1101.0 1850.5,1102.8 1851.5,1103.0 1852.5,1097.3 1853.5,1101.8 1854.5,1102.9 1855.5,1100.2 1856.5,1099.0 1857.5,1102.7 1858.5,1100.4 1859.5,1101.9 1860.5,1101.0 1861.5,1103.0 1862.5,1103.0 1863.5,1097.2 1864.5,1098.3 1865.5,1101.1 1866.5,1100.6 1867.5,1102.3 1868.5,1099.0 1869.5,1101.5 1870.5,1097.5 1871.5,1099.1 1872.0,1099.1 1872.0,1110.5"/>
<rect x="227" y="262" width="3" height="848" fill="#5c5cb8" fill-opacity="0.78"/>
<rect x="230.8" y="382" width="5.4" height="728" fill="#a01c14" fill-opacity="0.82"/>
<path d="M238.2 1110 V292 H429.3" stroke="#226872" stroke-opacity="0.62" stroke-width="3" fill="none"/>
<rect x="427.6" y="292" width="4" height="818" fill="#2a7084" fill-opacity="0.72"/>
<rect x="1322.2" y="200" width="4.2" height="910" fill="#2a8a62" fill-opacity="0.74"/>
<text filter="url(#ts)" x="232.6" y="283.9" font-size="25.6" textLength="265.5" lengthAdjust="spacingAndGlyphs" fill="#e2e2e2" stroke="#e2e2e2" stroke-width="0.45">YAW LPF cutoff 100Hz</text>
<text filter="url(#ts)" x="241.4" y="314.1" font-size="25.6" textLength="495" lengthAdjust="spacingAndGlyphs" fill="#e2e2e2" stroke="#e2e2e2" stroke-width="0.45">D-TERM LPF (PT1) Dyn cutoff 105-210Hz</text>
<text filter="url(#ts)" x="433.7" y="343.2" font-size="25.6" textLength="396.2" lengthAdjust="spacingAndGlyphs" fill="#e2e2e2" stroke="#e2e2e2" stroke-width="0.45">D-TERM LPF2 (PT1) cutoff 210Hz</text>
<text filter="url(#ts)" x="236.6" y="403.6" font-size="25.6" textLength="286.6" lengthAdjust="spacingAndGlyphs" fill="#e2e2e2" stroke="#e2e2e2" stroke-width="0.45">Max motor noise 103Hz</text>
<text filter="url(#ts)" x="1327.4" y="224" font-size="25.6" textLength="372" lengthAdjust="spacingAndGlyphs" fill="#e2e2e2" stroke="#e2e2e2" stroke-width="0.45">GYRO LPF2 (PT1) cutoff 700Hz</text>
<text filter="url(#ts)" x="1738" y="1097.1" font-size="25.6" textLength="124.4" lengthAdjust="spacingAndGlyphs" fill="#e2e2e2" stroke="#e2e2e2" stroke-width="0.45">Gyro [roll]</text>
<text filter="url(#ts)" x="46.5" y="1129.6" font-size="25.6" textLength="46" lengthAdjust="spacingAndGlyphs" fill="#e2e2e2" stroke="#e2e2e2" stroke-width="0.45">0Hz</text>
<text filter="url(#ts)" x="373.5" y="1129.6" font-size="25.6" textLength="76" lengthAdjust="spacingAndGlyphs" fill="#e2e2e2" stroke="#e2e2e2" stroke-width="0.45">200Hz</text>
<text filter="url(#ts)" x="738.5" y="1129.6" font-size="25.6" textLength="76" lengthAdjust="spacingAndGlyphs" fill="#e2e2e2" stroke="#e2e2e2" stroke-width="0.45">400Hz</text>
<text filter="url(#ts)" x="1103.5" y="1129.6" font-size="25.6" textLength="76" lengthAdjust="spacingAndGlyphs" fill="#e2e2e2" stroke="#e2e2e2" stroke-width="0.45">600Hz</text>
<text filter="url(#ts)" x="1469" y="1129.6" font-size="25.6" textLength="76" lengthAdjust="spacingAndGlyphs" fill="#e2e2e2" stroke="#e2e2e2" stroke-width="0.45">800Hz</text>
<text filter="url(#ts)" x="1781.5" y="1129.6" font-size="25.6" textLength="92.5" lengthAdjust="spacingAndGlyphs" fill="#e2e2e2" stroke="#e2e2e2" stroke-width="0.45">1000Hz</text>
<rect x="1580" y="722.5" width="245" height="24.5" fill="none" stroke="#565656" stroke-width="2"/>
<rect x="1613.500" y="164.700" width="197" height="15" rx="7.500" fill="#efefef" stroke="#b4b4b4" stroke-width="1.200"/>
<path d="M1621 164.700 H1634 V179.700 H1621 a7.500 7.500 0 0 1 0 -15 Z" fill="#3b78f2" stroke="#8a9cc0" stroke-width="1"/>
<circle cx="1634" cy="171.900" r="15.400" fill="#3375f5"/>
<rect x="1633.2" y="186" width="1.600" height="8" fill="#8a8a8a"/>
<rect x="1672.2" y="186" width="1.600" height="8" fill="#8a8a8a"/>
<rect x="1711" y="186" width="1.600" height="8" fill="#8a8a8a"/>
<rect x="1750.2" y="186" width="1.600" height="8" fill="#8a8a8a"/>
<rect x="1789.2" y="186" width="1.600" height="8" fill="#8a8a8a"/>
<rect x="1834.200" y="203.500" width="15.800" height="197" rx="7.900" fill="#efefef" stroke="#b4b4b4" stroke-width="1.200"/>
<path d="M1834.200 330 H1850 V392.900 a7.900 7.900 0 0 1 -15.800 0 Z" fill="#3b78f2" stroke="#8a9cc0" stroke-width="1"/>
<circle cx="1842.100" cy="330" r="15.500" fill="#3375f5"/>
</svg>
<!--/GRAPH-->
</div>

<!-- ===== right panel ===== -->
<div class="abs" id="panel" style="left:1892px;top:122px;width:500px;height:1028px;background:#222">
<!--PANEL-->
<div class="abs" style="left:28px;top:40px;font-weight:bold;font-size:44px;line-height:50px;color:#b9b9b9;letter-spacing:0px;white-space:nowrap">Pitch Std</div>
<div class="abs" style="left:28px;top:107px;width:444px;height:68px;border:2px solid #c8c8c8;border-radius:8px;background:#fff;font-size:28px;line-height:66px;color:#555;padding-left:30.500px;letter-spacing:0.17px;-webkit-text-stroke:0.3px #555;white-space:nowrap;box-shadow:inset 0 2px 2px rgba(0,0,0,.08)">3/3: 07:29 - 08:14 [00:44]<svg class="abs" style="left:416px;top:27px" width="20" height="14" viewBox="0 0 20 14"><path d="M1.5 2.5 L10 11 L18.5 2.5" fill="none" stroke="#444" stroke-width="2.2"/></svg></div>
<div class="abs" style="left:28px;top:207.2px;width:45px;height:42px;border-radius:10px;background:linear-gradient(#fdf3c8 0%,#fbe394 45%,#f6c444 100%)"><div class="abs" style="left:13px;top:15.500px;width:22px;height:8px;background:#b0b0b0"></div></div>
<div class="abs" style="left:79.5px;top:211.7px;font-weight:bold;font-size:30px;line-height:34px;color:#b9b9b9;letter-spacing:-0.45px;white-space:nowrap">Custom graph</div>
<div class="abs" style="left:43.5px;top:264.7px;font-size:24px;line-height:28px;color:#bbb;-webkit-text-stroke:0.25px #bbb;white-space:nowrap;letter-spacing:0.03px">Gyro [roll]</div>
<div class="abs" style="left:295.5px;top:264.7px;width:120px;text-align:right;font-size:24px;line-height:28px;color:#bbb;-webkit-text-stroke:0.25px #bbb;white-space:nowrap;letter-spacing:0.2px">-1 &deg;/s</div>
<svg class="abs" style="left:429.8px;top:264.4px" width="27.500" height="21.200" viewBox="0 0 26 20"><path d="M1 10 C5 2.5 9.5 1 13 1 C16.500 1 21 2.500 25 10 C21 17.500 16.500 19 13 19 C9.500 19 5 17.500 1 10 Z M13 3.300 C9.300 3.300 6.300 6.300 6.300 10 C6.300 13.700 9.300 16.700 13 16.700 C16.700 16.700 19.700 13.700 19.700 10 C19.700 6.300 16.700 3.300 13 3.300 Z" fill="#b4b4b4" fill-rule="evenodd"/><path d="M13 5.600 C10.600 5.600 8.600 7.600 8.600 10 C8.600 12.400 10.600 14.400 13 14.400 C15.400 14.400 17.400 12.400 17.400 10 C17.400 9.300 17.200 8.600 16.900 8 C16.500 8.900 15.600 9.500 14.600 9.500 C13.200 9.500 12.100 8.400 12.100 7 C12.100 6.400 12.300 5.900 12.600 5.600 Z" fill="#b4b4b4"/></svg>
<div class="abs" style="left:44px;top:296px;width:411px;height:22.500px;background:#c47064;font-weight:bold;font-size:16px;line-height:24px;color:#000;padding-left:5.500px;white-space:nowrap;letter-spacing:-0.05px">Z100 E100 S30</div>
<div class="abs" style="left:28px;top:350px;width:45px;height:42px;border-radius:10px;background:linear-gradient(#fdf3c8 0%,#fbe394 45%,#f6c444 100%)"><div class="abs" style="left:13px;top:15.500px;width:22px;height:8px;background:#b0b0b0"></div></div>
<div class="abs" style="left:79.5px;top:354.5px;font-weight:bold;font-size:30px;line-height:34px;color:#b9b9b9;letter-spacing:-0.45px;white-space:nowrap">Custom graph</div>
<div class="abs" style="left:43.5px;top:407.5px;font-size:24px;line-height:28px;color:#bbb;-webkit-text-stroke:0.25px #bbb;white-space:nowrap;letter-spacing:0.03px">Unfiltered Gyro [roll]</div>
<div class="abs" style="left:295.5px;top:407.5px;width:120px;text-align:right;font-size:24px;line-height:28px;color:#bbb;-webkit-text-stroke:0.25px #bbb;white-space:nowrap;letter-spacing:0.2px">0 &deg;/s</div>
<svg class="abs" style="left:429.8px;top:407.2px" width="27.500" height="21.200" viewBox="0 0 26 20"><path d="M1 10 C5 2.5 9.5 1 13 1 C16.500 1 21 2.500 25 10 C21 17.500 16.500 19 13 19 C9.500 19 5 17.500 1 10 Z M13 3.300 C9.300 3.300 6.300 6.300 6.300 10 C6.300 13.700 9.300 16.700 13 16.700 C16.700 16.700 19.700 13.700 19.700 10 C19.700 6.300 16.700 3.300 13 3.300 Z" fill="#b4b4b4" fill-rule="evenodd"/><path d="M13 5.600 C10.600 5.600 8.600 7.600 8.600 10 C8.600 12.400 10.600 14.400 13 14.400 C15.400 14.400 17.400 12.400 17.400 10 C17.400 9.300 17.200 8.600 16.900 8 C16.500 8.900 15.600 9.500 14.600 9.500 C13.200 9.500 12.100 8.400 12.100 7 C12.100 6.400 12.300 5.900 12.600 5.600 Z" fill="#b4b4b4"/></svg>
<div class="abs" style="left:44px;top:438.8px;width:411px;height:22.500px;background:#c47064;font-weight:bold;font-size:16px;line-height:24px;color:#000;padding-left:5.500px;white-space:nowrap;letter-spacing:-0.05px">Z100 E100 S30</div>
<svg class="abs" style="left:75px;top:860px" width="52" height="52" viewBox="0 0 52 52" fill="none" stroke="#5a5a5a" stroke-width="2.200"><path d="M2.500 27 C7 44 20 44 25 27 C29 8 43 8 49.500 27" stroke-linecap="round"/><path d="M26 9 V43" stroke-width="3.200"/><path d="M20 8 L26 1.500 L32 8 Z M20.500 13.500 L26 8 L31.500 13.500 Z M20 44 L26 50.500 L32 44 Z M20.500 38.500 L26 44 L31.500 38.500 Z" fill="#5a5a5a" stroke="none"/></svg>
<svg class="abs" style="left:222.5px;top:861px" width="52" height="52" viewBox="0 0 52 52" fill="none" stroke="#5a5a5a" stroke-width="1.800" stroke-linejoin="round"><path d="M2 25 C6 42 17 42 24 25 C30 8 42 8 49.500 25" stroke-width="2.200"/><path d="M2 23 L8 47 L14 31 L20 46.500 L27 6.500 L33 30 L39 2 L44 24 L49 24.500 L48 19"/></svg>
<svg class="abs" style="left:367.5px;top:861px" width="52" height="52" viewBox="0 0 52 52" fill="none" stroke="#4a4a4a" stroke-width="1.600"><path d="M2 7 H50 M2 19 H50 M2 31 H50 M2 43 H50"/><path d="M2.500 25 C6 42 17 42 25 25 C31 8 43 8 49.500 22" stroke="#5c5c5c" stroke-width="2.400"/></svg>
<div class="abs" style="left:28px;top:932px;width:444px;height:68px;border:2px solid #cfcfcf;border-radius:8px;background:linear-gradient(#ffffff,#e2e2e2);font-size:28px;line-height:64px;color:#333;text-align:center;white-space:nowrap">Graph setup</div>
<!--/PANEL-->
</div>

<!-- ===== timeline ===== -->
<div class="abs" id="timeline" style="left:26px;top:1160px;width:2366px;height:100px;background:#ededed;overflow:hidden">
<!--TIMELINE-->
<svg class="abs" style="left:0;top:0" width="2366" height="100" viewBox="26 1160 2366 100" shape-rendering="crispEdges">
<rect x="158.300" y="1160" width="6.600" height="100" fill="#9bdc8c"/><rect x="1216" y="1160" width="6.600" height="100" fill="#9bdc8c"/>
<polygon points="39.0,1260.0 39.1,1220.1 99.3,1220.1 125.8,1217.8 172.2,1217.8 178.8,1212.2 192.1,1207.9 205.3,1204.6 211.9,1199.6 225.2,1194.0 238.4,1192.3 253.3,1189.7 258.3,1189.0 258.3,1214.5 264.9,1214.5 264.9,1181.4 281.5,1179.1 307.9,1175.8 324.5,1172.1 347.7,1168.5 359.3,1167.8 359.3,1173.1 365.2,1173.1 365.2,1166.5 382.5,1165.2 392.4,1166.5 392.4,1170.8 397.4,1170.8 397.4,1182.1 404.0,1182.1 404.0,1193.0 411.6,1193.0 411.6,1204.6 418.9,1204.6 418.9,1208.9 425.5,1208.9 425.5,1212.2 430.5,1213.5 440.4,1214.5 463.6,1213.8 465.2,1211.2 471.9,1211.2 471.9,1204.6 478.5,1201.3 490.1,1200.3 491.7,1198.9 498.3,1197.0 511.6,1194.0 557.9,1194.6 557.9,1199.6 563.9,1199.6 563.9,1194.6 670.5,1194.0 677.2,1195.6 677.2,1206.2 683.8,1207.9 711.9,1207.5 750.0,1206.2 751.0,1202.9 764.9,1200.6 765.0,1200.6 862.6,1200.6 869.3,1202.9 869.3,1207.9 877.5,1209.5 909.0,1210.5 917.3,1213.8 1001.7,1214.5 1010.0,1216.2 1010.0,1220.1 1018.3,1222.1 1082.8,1222.1 1082.8,1226.8 1089.5,1227.7 1089.5,1232.7 1097.7,1234.0 1122.6,1234.4 1130.9,1237.0 1144.1,1241.0 1152.4,1242.6 1203.7,1242.6 1217.0,1241.0 1230.2,1242.6 1230.2,1238.3 1241.8,1238.3 1243.4,1240.3 1263.3,1242.6 1286.5,1242.0 1303.0,1243.0 1313.0,1242.0 1326.2,1243.0 1342.8,1242.3 1356.0,1243.6 1366.0,1244.3 1402.4,1243.0 1402.4,1240.3 1409.0,1239.3 1409.0,1234.4 1415.6,1231.1 1440.5,1231.1 1442.1,1234.4 1455.4,1233.4 1462.0,1229.4 1488.5,1229.4 1505.0,1226.8 1521.6,1229.4 1559.7,1231.1 1602.8,1232.1 1619.3,1231.1 1665.7,1230.4 1672.3,1229.4 1705.4,1230.1 1731.9,1227.7 1765.0,1228.1 1775.0,1229.4 1827.9,1230.1 1851.1,1229.4 1894.2,1229.4 1910.7,1231.1 1940.5,1231.7 1950.5,1235.0 1970.3,1238.7 2016.7,1238.7 2029.9,1236.0 2033.2,1232.7 2043.2,1230.4 2071.3,1230.4 2182.3,1230.4 2394.2,1229.4 2392.0,1229.4 2392.0,1260.0" fill="#b0b0f5"/>
<rect x="158.300" y="1160" width="6.600" height="100" fill="#78b478" fill-opacity="0.18"/><rect x="1216" y="1160" width="6.600" height="100" fill="#78b478" fill-opacity="0.18"/>
<rect x="26" y="1160" width="13" height="100" fill="#ec7069"/>
<rect x="39" y="1160" width="20" height="100" fill="#e06060" fill-opacity="0.22"/>
</svg>
<!--/TIMELINE-->
</div>
<div class="abs" style="left:0;top:1270px;width:2416px;height:2px;background:#7d7d76"></div>

<!-- ===== finder window ===== -->
<!--FINDER-->
<div class="abs" style="left:2072px;top:1082px;width:520px;height:400px;border-radius:20px;box-shadow:0 22px 46px 4px rgba(0,0,0,.40),0 0 0 1px rgba(0,0,0,.20);background:#fff;overflow:hidden">
<div class="abs" style="left:0;top:0;width:326px;height:400px;background:#e0e0de;border-right:1px solid #cdcdcb"></div>
<div class="abs" style="left:327px;top:0;width:200px;height:1px;background:#d6d6d6"></div>
<div class="abs" style="left:40px;top:40px;width:24px;height:24px;border-radius:50%;background:#ec6a5e;box-shadow:inset 0 0 0 1px #d5574b"></div>
<div class="abs" style="left:80px;top:40px;width:24px;height:24px;border-radius:50%;background:#f4bf4f;box-shadow:inset 0 0 0 1px #d8a33a"></div>
<div class="abs" style="left:120px;top:40px;width:24px;height:24px;border-radius:50%;background:#61c554;box-shadow:inset 0 0 0 1px #4fa844"></div>
<div class="abs" style="left:32.500px;top:113px;font-weight:bold;font-size:22px;line-height:26px;color:#a3a3a1;white-space:nowrap">Favoris</div>
<svg class="abs" style="left:36px;top:154px" width="32" height="32" viewBox="0 0 32 32" fill="none" stroke="#1a7cf5" stroke-width="2.050" stroke-linecap="round"><path d="M8.200 27.200 A13.500 13.500 0 1 1 23.800 27.200"/><path d="M10.300 23.800 A9.300 9.300 0 1 1 21.700 23.800"/><path d="M12.700 20.500 A5 5 0 1 1 19.300 20.500"/><circle cx="16" cy="16.600" r="1.700" fill="#1a7cf5" stroke="none"/></svg>
<div class="abs" style="left:80.500px;top:155.500px;font-size:26px;line-height:32px;color:#353535;-webkit-text-stroke:0.3px #353535;white-space:nowrap;letter-spacing:0.75px">AirDrop</div>
</div>
<!--/FINDER-->
</div>
</body></html>
